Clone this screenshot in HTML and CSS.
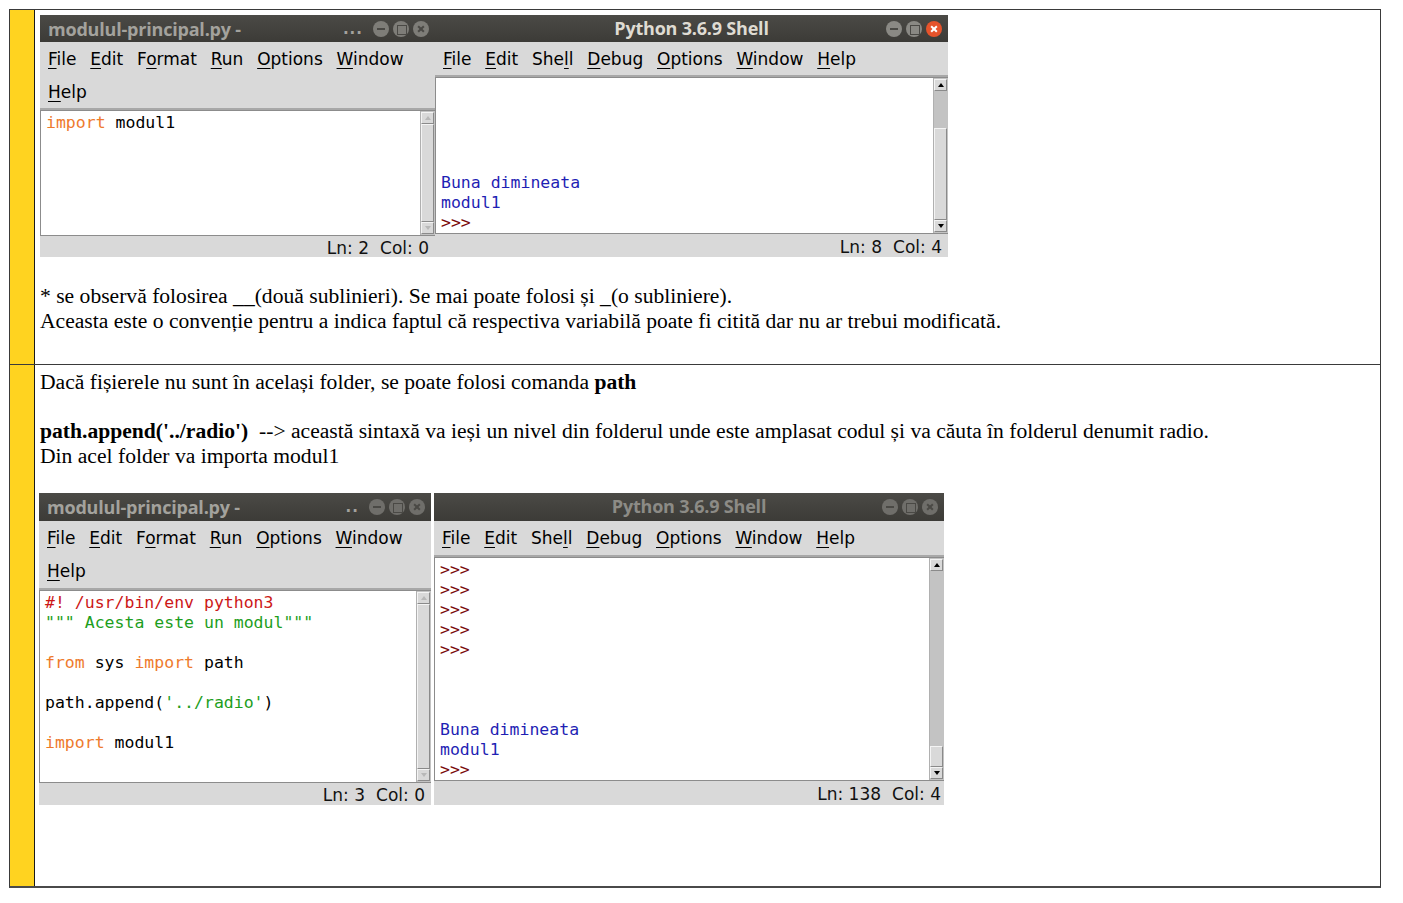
FILE: index.html
```html
<!DOCTYPE html>
<html lang="ro">
<head>
<meta charset="utf-8">
<title>Module Python</title>
<link rel="stylesheet" href="styles.css">
</head>
<body>
<div class="doc">
  <div class="row row1">
    <div class="marker"></div>
    <div class="cell">
      <div class="shots">
        <div class="win ed ed1">
          <div class="titlebar">
            <span class="ttl">modulul-principal.py -</span>
            <span class="dots">...</span>
            <span class="btns"><i class="b min"></i><i class="b max"></i><i class="b cls"></i></span>
          </div>
          <div class="menubar">
            <span><u>F</u>ile</span><span><u>E</u>dit</span><span>F<u>o</u>rmat</span><span><u>R</u>un</span><span><u>O</u>ptions</span><span><u>W</u>indow</span><span><u>H</u>elp</span>
          </div>
          <div class="text">
            <pre class="code"><span class="kw">import</span> modul1</pre>
            <div class="sb full"><i class="ar up"></i><i class="track"></i><i class="ar dn"></i></div>
          </div>
          <div class="status"><span>Ln: 2</span><span>Col: 0</span></div>
        </div>
        <div class="win sh sh1">
          <div class="titlebar active">
            <span class="ttl center">Python 3.6.9 Shell</span>
            <span class="btns"><i class="b min"></i><i class="b max"></i><i class="b cls"></i></span>
          </div>
          <div class="menubar">
            <span><u>F</u>ile</span><span><u>E</u>dit</span><span>She<u>l</u>l</span><span><u>D</u>ebug</span><span><u>O</u>ptions</span><span><u>W</u>indow</span><span><u>H</u>elp</span>
          </div>
          <div class="text">
            <pre class="code bottom"><span class="out">Buna dimineata</span>
<span class="out">modul1</span>
<span class="pr">&gt;&gt;&gt;</span> </pre>
            <div class="sb"><i class="ar up dark"></i><i class="trough t1"></i><i class="slider s1"></i><i class="ar dn dark"></i></div>
          </div>
          <div class="status"><span>Ln: 8</span><span>Col: 4</span></div>
        </div>
      </div>
      <p class="txt gap1">* se observă folosirea __(două sublinieri). Se mai poate folosi și _(o subliniere).<br>Aceasta este o convenție pentru a indica faptul că respectiva variabilă poate fi citită dar nu ar trebui modificată.</p>
    </div>
  </div>
  <div class="row row2">
    <div class="marker"></div>
    <div class="cell">
      <p class="txt">Dacă fișierele nu sunt în același folder, se poate folosi comanda <b>path</b><br><br><b>path.append('../radio')</b> &nbsp;--&gt; această sintaxă va ieși un nivel din folderul unde este amplasat codul și va căuta în folderul denumit radio.<br>Din acel folder va importa modul1</p>
      <div class="shots shots2">
        <div class="win ed ed2">
          <div class="titlebar">
            <span class="ttl">modulul-principal.py -</span>
            <span class="dots">..</span>
            <span class="btns"><i class="b min"></i><i class="b max"></i><i class="b cls"></i></span>
          </div>
          <div class="menubar">
            <span><u>F</u>ile</span><span><u>E</u>dit</span><span>F<u>o</u>rmat</span><span><u>R</u>un</span><span><u>O</u>ptions</span><span><u>W</u>indow</span><span><u>H</u>elp</span>
          </div>
          <div class="text">
            <pre class="code"><span class="cm">#! /usr/bin/env python3</span>
<span class="st">""" Acesta este un modul"""</span>

<span class="kw">from</span> sys <span class="kw">import</span> path

path.append(<span class="st">'../radio'</span>)

<span class="kw">import</span> modul1</pre>
            <div class="sb full"><i class="ar up"></i><i class="track"></i><i class="ar dn"></i></div>
          </div>
          <div class="status"><span>Ln: 3</span><span>Col: 0</span></div>
        </div>
        <div class="win sh sh2">
          <div class="titlebar">
            <span class="ttl center">Python 3.6.9 Shell</span>
            <span class="btns"><i class="b min"></i><i class="b max"></i><i class="b cls"></i></span>
          </div>
          <div class="menubar">
            <span><u>F</u>ile</span><span><u>E</u>dit</span><span>She<u>l</u>l</span><span><u>D</u>ebug</span><span><u>O</u>ptions</span><span><u>W</u>indow</span><span><u>H</u>elp</span>
          </div>
          <div class="text">
            <pre class="code"><span class="pr">&gt;&gt;&gt;</span>
<span class="pr">&gt;&gt;&gt;</span>
<span class="pr">&gt;&gt;&gt;</span>
<span class="pr">&gt;&gt;&gt;</span>
<span class="pr">&gt;&gt;&gt;</span>



<span class="out">Buna dimineata</span>
<span class="out">modul1</span>
<span class="pr">&gt;&gt;&gt;</span> </pre>
            <div class="sb"><i class="ar up dark"></i><i class="trough t2"></i><i class="slider s2"></i><i class="trough t3"></i><i class="ar dn dark"></i></div>
          </div>
          <div class="status"><span>Ln: 138</span><span>Col: 4</span></div>
        </div>
      </div>
    </div>
  </div>
</div>
</body>
</html>
```
FILE: styles.css
```css
* { box-sizing: border-box; }
html, body { margin: 0; padding: 0; background: #fff; }
body { font-family: "Liberation Serif", "Times New Roman", serif; color: #000; }

.doc {
  margin: 9px 0 0 9px;
  width: 1372px;
  border: 1px solid #3a3a3a;
  border-bottom: 2px solid #4a4a4a;
}
.row { display: grid; grid-template-columns: 25px 1fr; }
.row1 { height: 355px; border-bottom: 1px solid #3a3a3a; }
.row2 { height: 521px; }
.marker { background: #ffd320; border-right: 1px solid #1a1a1a; }
.cell { padding: 5px 0 0 5px; }

.txt { margin: 0; font-size: 21.6px; line-height: 24.5px; }
.gap1 { margin-top: 27px; }

.shots { display: flex; align-items: flex-start; }
.shots2 { margin-top: 24.5px; margin-left: -1px; gap: 3px; }

/* window */
.win { display: flex; flex-direction: column; background: #d9d9d9; overflow: hidden; }
.ed1 { width: 395px; height: 242px; box-shadow: 1px 0 0 #8a8a8a; }
.sh1 { width: 513px; height: 242px; }
.ed2 { width: 392px; height: 312px; }
.sh2 { width: 510px; height: 312px; }

.titlebar {
  flex: none; height: 27px; display: flex; align-items: center;
  background: linear-gradient(#4b4a46, #3c3b37);
  padding: 0 6px 0 8px; position: relative;
}
.ed2 .titlebar, .sh2 .titlebar { height: 28px; }
.ttl {
  font-family: "Open Sans", "DejaVu Sans", sans-serif; font-weight: 700;
  font-size: 18px; letter-spacing: -0.2px; line-height: 24px; color: #a3a29d; white-space: nowrap;
}
.ttl.center { position: absolute; left: 0; right: 0; text-align: center; top: 1px; }
.active .ttl { color: #dfdbd2; }
.sh2 .ttl { color: #8c8b86; }
.dots {
  margin-left: auto; margin-right: 10px; color: #a3a29d;
  font-family: "DejaVu Sans", sans-serif; font-weight: 700; font-size: 15px; letter-spacing: 1px;
}
.btns { margin-left: auto; display: flex; gap: 4px; position: relative; }
.dots + .btns { margin-left: 0; }
.b {
  width: 16px; height: 16px; border-radius: 50%; background: #7e7d78;
  position: relative; display: block;
}
.ed2 .b, .sh2 .b { background: #6f6e6a; }
.b::before, .b::after { content: ""; position: absolute; background: #4a4945; }
.b.min::before { left: 4px; right: 4px; top: 7px; height: 2px; }
.b.max::before { left: 4px; top: 4px; width: 8px; height: 8px; background: none; border: 1.5px solid #4a4945; }
.b.cls::before, .b.cls::after { left: 7px; top: 4px; width: 2px; height: 8px; }
.b.cls::before { transform: rotate(45deg); }
.b.cls::after { transform: rotate(-45deg); }
.active .b { background: #8a8984; }
.active .b.cls { background: #e6532b; }
.active .b.cls::before, .active .b.cls::after { background: #fff; }

.menubar {
  flex: none; display: flex; flex-wrap: wrap; align-content: flex-start;
  font-family: "DejaVu Sans", sans-serif; font-size: 17px; color: #000;
  padding: 0 0 0 8px; column-gap: 13.8px;
  border-bottom: 2px solid #a8a8a8;
}
.menubar span { height: 33px; line-height: 34px; white-space: nowrap; }
.menubar u { text-decoration-thickness: 1px; text-underline-offset: 3px; }
.ed1 .menubar { height: 68px; }
.sh1 .menubar { height: 35px; }
.ed2 .menubar { height: 69px; }
.sh2 .menubar { height: 36px; }

.text {
  flex: 1; min-height: 0; display: flex; background: #fff;
  border: 1px solid #8c8c8c; border-right: none;
}
.code {
  flex: 1; margin: 0; padding: 2px 0 0 5px;
  font-family: "DejaVu Sans Mono", monospace; font-size: 16.5px; line-height: 20px;
  color: #000; overflow: hidden;
}
.sh2 .code { padding-top: 2px; }
.code.bottom { display: flex; flex-direction: column; justify-content: flex-end; padding: 0 0 0 5px; white-space: pre; }
.kw { color: #ee7a2c; }
.st { color: #1d9e1d; }
.cm { color: #cc1717; }
.out { color: #1f1fb4; }
.pr { color: #7a0a0a; }

/* scrollbar */
.sb { flex: none; width: 15px; display: flex; flex-direction: column; background: #c3c3c3; border-left: 1px solid #b0b0b0; padding: 1px 1px 1px 0; }
.sb i { display: block; }
.ar { height: 12px; flex: none; position: relative; background: #d9d9d9; border: 1px solid; border-color: #f4f4f4 #8a8a8a #8a8a8a #f4f4f4; }
.ar::after { content: ""; position: absolute; left: 3px; border-left: 3.5px solid transparent; border-right: 3.5px solid transparent; }
.ar.up::after { top: 3px; border-bottom: 4px solid #b8b8b8; }
.ar.dn::after { top: 3px; border-top: 4px solid #b8b8b8; }
.ar.dark.up::after { border-bottom-color: #000; }
.ar.dark.dn::after { border-top-color: #000; }
.track { flex: 1; background: #d9d9d9; border: 1px solid; border-color: #f4f4f4 #8a8a8a #8a8a8a #f4f4f4; }
.trough { background: #c3c3c3; }
.slider { background: #d9d9d9; border: 1px solid; border-color: #f4f4f4 #8a8a8a #8a8a8a #f4f4f4; }
.t1 { height: 37px; flex: none; }
.s1 { flex: 1; }
.t2 { flex: 1; }
.s2 { height: 21px; flex: none; }
.t3 { height: 0; flex: none; }

.status {
  flex: none; display: flex; justify-content: flex-end; align-items: center; gap: 11px;
  font-family: "DejaVu Sans", sans-serif; font-size: 17px; color: #111;
  padding: 2px 6px 0 0; background: #d9d9d9;
}
.ed1 .status { height: 21px; }
.sh1 .status { height: 23px; }
.ed2 .status { height: 22px; }
.sh2 .status { height: 24px; padding-right: 3px; }
```
